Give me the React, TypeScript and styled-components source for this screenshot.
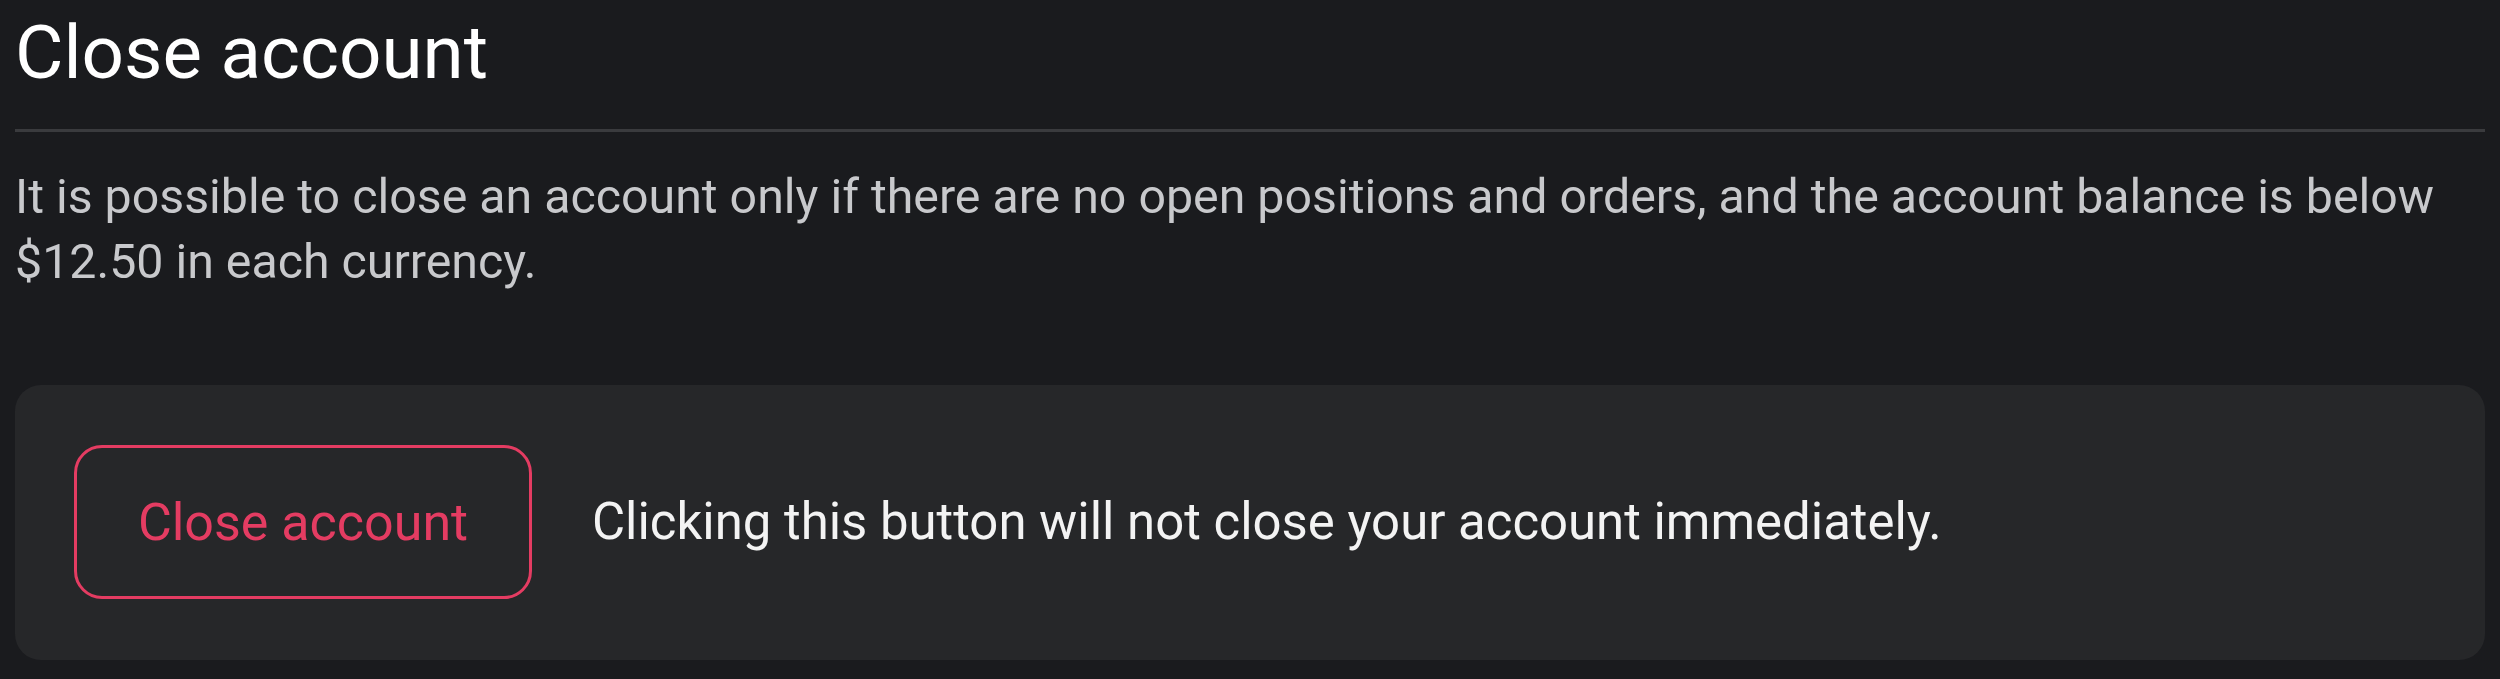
import React from "react";
import styled, { createGlobalStyle } from "styled-components";

const GlobalStyle = createGlobalStyle`
  html, body {
    margin: 0;
    padding: 0;
    background: #1a1b1e;
  }
  body {
    font-family: Roboto, "Liberation Sans", Arial, sans-serif;
    -webkit-font-smoothing: antialiased;
  }
`;

const Page = styled.main`
  display: flex;
  flex-direction: column;
  padding: 0 15px;
  min-height: 679px;
  box-sizing: border-box;
  background: #1a1b1e;
`;

const Title = styled.h1`
  margin: 0;
  padding-top: 15px;
  font-size: 74.5px;
  line-height: 75px;
  font-weight: 400;
  color: #ffffff;
  letter-spacing: 0;
`;

const Divider = styled.hr`
  margin: 39px 0 0;
  border: none;
  height: 3px;
  background: #3a3b3e;
`;

const Description = styled.p`
  margin: 32px 0 0;
  font-size: 48.3px;
  line-height: 65px;
  color: #c8c9cc;
  font-weight: 400;
`;

const Card = styled.section`
  margin-top: 91px;
  display: flex;
  align-items: center;
  gap: 60px;
  padding: 60px 59px 61px;
  background: #262729;
  border-radius: 26px;
`;

const DangerButton = styled.button`
  flex: none;
  box-sizing: border-box;
  width: 458px;
  height: 154px;
  border: 3px solid #e43c62;
  border-radius: 28px;
  background: transparent;
  color: #e43c62;
  font-family: inherit;
  font-size: 52px;
  font-weight: 400;
  cursor: pointer;
  padding: 0;
`;

const Note = styled.p`
  margin: 0;
  font-size: 50.9px;
  line-height: 1.2;
  color: #f3f3f3;
`;

export default function App() {
  return (
    <>
      <GlobalStyle />
      <Page>
        <Title>Close account</Title>
        <Divider />
        <Description>
          It is possible to close an account only if there are no open positions and orders, and the account balance is below
          $12.50 in each currency.
        </Description>
        <Card>
          <DangerButton type="button">Close account</DangerButton>
          <Note>Clicking this button will not close your account immediately.</Note>
        </Card>
      </Page>
    </>
  );
}
